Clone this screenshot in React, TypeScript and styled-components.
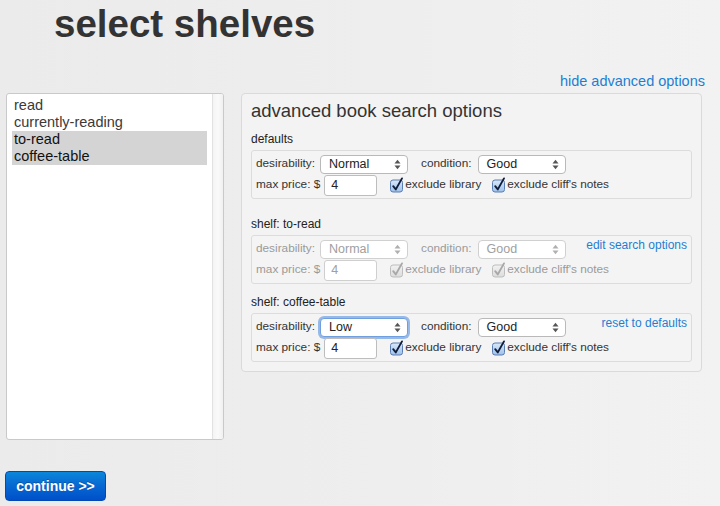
import React from "react";
import styled, { createGlobalStyle, css } from "styled-components";

const GlobalStyle = createGlobalStyle`
  html, body { margin: 0; padding: 0; }
  body {
    width: 720px;
    height: 506px;
    overflow: hidden;
    background: linear-gradient(90deg, #ebebeb 0%, #eeeeee 55%, #f2f2f2 100%);
    font-family: "Liberation Sans", Arial, Helvetica, sans-serif;
    color: #333;
  }
`;

const Page = styled.div`
  width: 720px;
  height: 506px;
  display: flex;
  flex-direction: column;
`;

const Title = styled.h1`
  margin: 0;
  padding: 2px 0 0 54px;
  height: 44px;
  font-size: 38.5px;
  line-height: 44px;
  font-weight: bold;
  color: #333;
`;

const TopLinkRow = styled.div`
  display: flex;
  justify-content: flex-end;
  margin-top: 27px;
  padding-right: 15px;
  height: 17px;
`;

const Link = styled.a<{ $size?: number }>`
  color: #1d7fd2;
  text-decoration: none;
  font-size: ${(p) => p.$size ?? 12}px;
  line-height: ${(p) => ((p.$size ?? 12) > 13 ? 17 : 14)}px;
  cursor: pointer;
`;

const Main = styled.div`
  display: flex;
  align-items: flex-start;
  gap: 17px;
  margin-top: 3px;
  padding-left: 6px;
`;

const ShelfList = styled.div`
  box-sizing: border-box;
  width: 218px;
  height: 347px;
  border: 1px solid #c9c9c9;
  border-radius: 3px;
  background: #fff;
  display: flex;
  overflow: hidden;
`;

const ListItems = styled.div`
  flex: 1;
  padding: 3px 5px 0 5px;
`;

const ListItem = styled.div<{ $selected?: boolean }>`
  font-size: 14.5px;
  line-height: 17px;
  padding-left: 2px;
  color: ${(p) => (p.$selected ? "#111" : "#3a3a3a")};
  background: ${(p) => (p.$selected ? "#d4d4d4" : "transparent")};
`;

const ScrollTrack = styled.div`
  width: 10px;
  border-left: 1px solid #e2e2e2;
  background: linear-gradient(90deg, #f4f4f4, #fafafa 50%, #f0f0f0);
`;

const Panel = styled.div`
  box-sizing: border-box;
  width: 461px;
  border: 1px solid #dadada;
  border-radius: 4px;
  background: #f3f3f3;
  padding: 6px 9px 9px 9px;
`;

const PanelTitle = styled.h2`
  margin: 0;
  font-size: 18.5px;
  line-height: 22px;
  font-weight: normal;
  color: #333;
`;

const Section = styled.div<{ $gap: number }>`
  margin-top: ${(p) => p.$gap}px;
`;

const SectionLabel = styled.div`
  font-size: 12px;
  line-height: 14px;
  color: #222;
  margin-bottom: 4px;
`;

const OptionBox = styled.div`
  border: 1px solid #dcdcdc;
  border-radius: 3px;
  background: #f4f4f4;
  padding: 3px 4px 2px 4px;
`;

const Row = styled.div<{ $h: number }>`
  display: flex;
  align-items: center;
  height: ${(p) => p.$h}px;
`;

const FieldLabel = styled.span<{ $disabled?: boolean; $ml?: number }>`
  font-size: 11.8px;
  line-height: 14px;
  padding-bottom: 2px;
  margin-left: ${(p) => p.$ml ?? 0}px;
  color: ${(p) => (p.$disabled ? "#9a9a9a" : "#333")};
  white-space: nowrap;
`;

const SelectBox = styled.div<{ $disabled?: boolean; $focused?: boolean; $ml: number }>`
  box-sizing: border-box;
  width: 88px;
  height: 19px;
  margin-left: ${(p) => p.$ml}px;
  border: 1px solid #b9b9b9;
  border-radius: 4px;
  background: #fff;
  display: flex;
  align-items: center;
  justify-content: space-between;
  padding: 0 6px 0 8px;
  font-size: 12.5px;
  color: ${(p) => (p.$disabled ? "#a0a0a0" : "#222")};
  ${(p) =>
    p.$disabled &&
    css`
      border-color: #d0d0d0;
    `}
  ${(p) =>
    p.$focused &&
    css`
      border-color: #6f9fde;
      box-shadow: 0 0 0 2px rgba(120, 165, 228, 0.75);
    `}
`;

const PriceInput = styled.div<{ $disabled?: boolean }>`
  box-sizing: border-box;
  width: 53px;
  height: 21px;
  margin-left: 4px;
  border: 1px solid ${(p) => (p.$disabled ? "#cfcfcf" : "#bdbdbd")};
  border-radius: 3px;
  background: #fff;
  display: flex;
  align-items: center;
  padding-left: 6px;
  font-size: 12.5px;
  color: ${(p) => (p.$disabled ? "#a0a0a0" : "#222")};
`;

const CheckWrap = styled.label<{ $ml: number; $disabled?: boolean }>`
  display: flex;
  align-items: center;
  margin-left: ${(p) => p.$ml}px;
  font-size: 11.8px;
  line-height: 14px;
  color: ${(p) => (p.$disabled ? "#9a9a9a" : "#333")};
  white-space: nowrap;
`;

const CheckText = styled.span`
  margin-left: 1px;
  padding-bottom: 2px;
`;

const SideLink = styled(Link)`
  margin-left: auto;
  align-self: flex-start;
  margin-top: -1px;
`;

const Footer = styled.div`
  margin-top: 31px;
  padding-left: 5px;
`;

const ContinueButton = styled.button`
  box-sizing: border-box;
  width: 101px;
  height: 30px;
  border: 1px solid #0548b4;
  border-radius: 4px;
  background: linear-gradient(180deg, #0b86da 0%, #0667d3 50%, #0050c9 100%);
  color: #fff;
  font-family: "Liberation Sans", Arial, sans-serif;
  font-weight: bold;
  font-size: 14px;
  line-height: 16px;
  padding: 0;
  text-shadow: 0 -1px 0 rgba(0, 0, 0, 0.25);
  cursor: pointer;
`;

const Arrows: React.FC<{ disabled?: boolean }> = ({ disabled }) => (
  <svg width="7" height="11" viewBox="0 0 7 11">
    <path d="M0.5 4.5 L3.5 0.8 L6.5 4.5 Z" fill={disabled ? "#b0b0b0" : "#555"} />
    <path d="M0.5 6.5 L3.5 10.2 L6.5 6.5 Z" fill={disabled ? "#b0b0b0" : "#555"} />
  </svg>
);

const CheckIcon: React.FC<{ disabled?: boolean }> = ({ disabled }) => (
  <svg width="14" height="16" viewBox="0 0 14 16">
    <defs>
      <linearGradient id={disabled ? "cbOff" : "cbOn"} x1="0" y1="0" x2="0" y2="1">
        <stop offset="0" stopColor={disabled ? "#f2f2f2" : "#d9e8f9"} />
        <stop offset="1" stopColor={disabled ? "#dcdcdc" : "#9dc1ec"} />
      </linearGradient>
    </defs>
    <rect
      x="0.5"
      y="3"
      width="12"
      height="12"
      rx="2.5"
      fill={`url(#${disabled ? "cbOff" : "cbOn"})`}
      stroke={disabled ? "#bdbdbd" : "#5a7db2"}
    />
    <path
      d="M3.2 9.2 L5.8 12.4 L12 1.4"
      stroke={disabled ? "#a8a8a8" : "#0f1d3a"}
      strokeWidth="1.9"
      fill="none"
      strokeLinecap="round"
      strokeLinejoin="round"
    />
  </svg>
);

type SectionData = {
  label: string;
  gap: number;
  desirability: string;
  condition: string;
  disabled?: boolean;
  focused?: boolean;
  link?: string;
};

const sections: SectionData[] = [
  { label: "defaults", gap: 10, desirability: "Normal", condition: "Good" },
  {
    label: "shelf: to-read",
    gap: 18,
    desirability: "Normal",
    condition: "Good",
    disabled: true,
    link: "edit search options",
  },
  {
    label: "shelf: coffee-table",
    gap: 11,
    desirability: "Low",
    condition: "Good",
    focused: true,
    link: "reset to defaults",
  },
];

const shelves = [
  { name: "read", selected: false },
  { name: "currently-reading", selected: false },
  { name: "to-read", selected: true },
  { name: "coffee-table", selected: true },
];

const OptionSection: React.FC<{ s: SectionData }> = ({ s }) => (
  <Section $gap={s.gap}>
    <SectionLabel>{s.label}</SectionLabel>
    <OptionBox>
      <Row $h={20}>
        <FieldLabel $disabled={s.disabled}>desirability:</FieldLabel>
        <SelectBox $ml={5} $disabled={s.disabled} $focused={s.focused}>
          <span>{s.desirability}</span>
          <Arrows disabled={s.disabled} />
        </SelectBox>
        <FieldLabel $disabled={s.disabled} $ml={13}>
          condition:
        </FieldLabel>
        <SelectBox $ml={6} $disabled={s.disabled}>
          <span>{s.condition}</span>
          <Arrows disabled={s.disabled} />
        </SelectBox>
        {s.link && <SideLink $size={12}>{s.link}</SideLink>}
      </Row>
      <Row $h={22}>
        <FieldLabel $disabled={s.disabled}>max price: $</FieldLabel>
        <PriceInput $disabled={s.disabled}>4</PriceInput>
        <CheckWrap $ml={13} $disabled={s.disabled}>
          <CheckIcon disabled={s.disabled} />
          <CheckText>exclude library</CheckText>
        </CheckWrap>
        <CheckWrap $ml={11} $disabled={s.disabled}>
          <CheckIcon disabled={s.disabled} />
          <CheckText>exclude cliff's notes</CheckText>
        </CheckWrap>
      </Row>
    </OptionBox>
  </Section>
);

export default function App() {
  return (
    <Page>
      <GlobalStyle />
      <Title>select shelves</Title>
      <TopLinkRow>
        <Link $size={14.5}>hide advanced options</Link>
      </TopLinkRow>
      <Main>
        <ShelfList>
          <ListItems>
            {shelves.map((s) => (
              <ListItem key={s.name} $selected={s.selected}>
                {s.name}
              </ListItem>
            ))}
          </ListItems>
          <ScrollTrack />
        </ShelfList>
        <Panel>
          <PanelTitle>advanced book search options</PanelTitle>
          {sections.map((s) => (
            <OptionSection key={s.label} s={s} />
          ))}
        </Panel>
      </Main>
      <Footer>
        <ContinueButton>continue &gt;&gt;</ContinueButton>
      </Footer>
    </Page>
  );
}
